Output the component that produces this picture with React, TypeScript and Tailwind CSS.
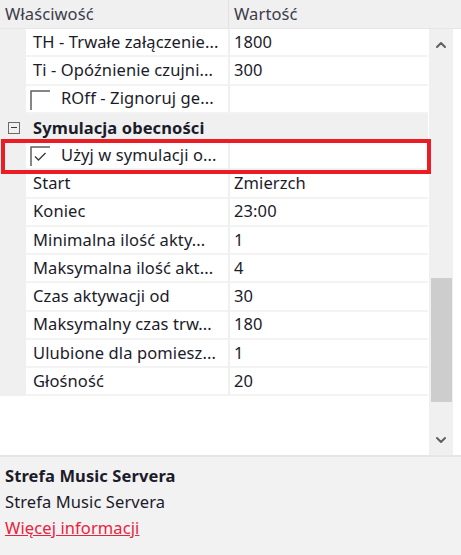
import { ChevronUp, ChevronDown } from 'lucide-react'

type Row =
  | { kind: 'prop'; name: string; value: string }
  | { kind: 'check'; name: string; checked: boolean }
  | { kind: 'cat'; name: string }

const rows: Row[] = [
  { kind: 'prop', name: 'TH - Trwałe załączenie...', value: '1800' },
  { kind: 'prop', name: 'Ti - Opóźnienie czujni...', value: '300' },
  { kind: 'check', name: 'ROff - Zignoruj ge...', checked: false },
  { kind: 'cat', name: 'Symulacja obecności' },
  { kind: 'check', name: 'Użyj w symulacji o...', checked: true },
  { kind: 'prop', name: 'Start', value: 'Zmierzch' },
  { kind: 'prop', name: 'Koniec', value: '23:00' },
  { kind: 'prop', name: 'Minimalna ilość akty...', value: '1' },
  { kind: 'prop', name: 'Maksymalna ilość akt...', value: '4' },
  { kind: 'prop', name: 'Czas aktywacji od', value: '30' },
  { kind: 'prop', name: 'Maksymalny czas trw...', value: '180' },
  { kind: 'prop', name: 'Ulubione dla pomiesz...', value: '1' },
  { kind: 'prop', name: 'Głośność', value: '20' },
]

function CheckBox({ checked }: { checked: boolean }) {
  return (
    <svg width="20" height="20" viewBox="0 0 20 20" className="shrink-0">
      <path d="M1 20V1h19" fill="none" stroke="#5f5f5f" strokeWidth="1.5" />
      {checked && <path d="M5 10.5l3.5 3.5 7-7" fill="none" stroke="#3c3c3c" strokeWidth="1.4" />}
    </svg>
  )
}

function PropRow({ row }: { row: Row }) {
  if (row.kind === 'cat') {
    return (
      <div className="flex h-[28.25px] items-center bg-[#f0f0f0]">
        <div className="flex w-[26px] justify-center pl-[1px]">
          <div className="relative h-[12px] w-[12px] border border-[#6a6a6a]">
            <div className="absolute left-[2px] right-[2px] top-[4.5px] h-[1px] bg-[#3a3a3a]" />
          </div>
        </div>
        <span className="pl-[7px] font-bold text-[#1b1b2a]">{row.name}</span>
      </div>
    )
  }
  return (
    <div className="flex h-[28.25px] bg-[#f0f0f0]">
      <div className="w-[26px] shrink-0" />
      <div className="flex w-[202px] shrink-0 items-center overflow-hidden whitespace-nowrap border-b-2 border-[#f3f3f3] bg-white pl-[7px]">
        {row.kind === 'check' ? (
          <>
            <span className="-ml-[3px] mt-[2px]">
              <CheckBox checked={row.checked} />
            </span>
            <span className="pl-[11px]">{row.name}</span>
          </>
        ) : (
          row.name
        )}
      </div>
      <div className="ml-[2px] flex flex-1 items-center border-b-2 border-[#f3f3f3] bg-white pl-[4px]">
        {row.kind === 'prop' ? row.value : ''}
      </div>
    </div>
  )
}

export default function App() {
  return (
    <div className="relative h-[555px] w-[461px] overflow-hidden bg-white font-['Noto_Sans',sans-serif] text-[16.5px] tracking-[0.1px] text-[#1b1b2a]">
      {/* nagłówek */}
      <div className="flex h-[29px] items-center border-b border-[#e6e6e6] bg-[#f0f0f0] text-[#3c3c4a]">
        <div className="w-[228px] pl-[5px]">Właściwość</div>
        <div className="h-full w-[1px] bg-[#e2e2e2]" />
        <div className="pl-[5px]">Wartość</div>
      </div>

      <div className="flex h-[426px]">
        <div className="w-[428px]">
          {rows.map((r, i) => (
            <PropRow key={i} row={r} />
          ))}
        </div>

        {/* scrollbar */}
        <div className="ml-[1px] flex w-[24px] flex-col items-center bg-[#f0f0f0]">
          <ChevronUp size={16} strokeWidth={3} className="mt-[8px] text-[#606060]" />
          <div className="mt-[225px] h-[124px] w-[21px] bg-[#cdcdcd]" />
          <ChevronDown size={16} strokeWidth={3} className="mt-auto mb-[7px] text-[#606060]" />
        </div>
      </div>

      {/* opis */}
      <div className="h-[100px] border-t-2 border-[#e6e6e6] bg-[#f2f2f2] px-[5px] pt-[6px] leading-[26px]">
        <div className="font-bold">Strefa Music Servera</div>
        <div>Strefa Music Servera</div>
        <div className="text-[#e8233f] underline">Więcej informacji</div>
      </div>

      {/* zaznaczenie */}
      <div className="pointer-events-none absolute left-[1px] top-[139px] h-[35px] w-[430px] border-[4px] border-[#ec1c24]" />
    </div>
  )
}
